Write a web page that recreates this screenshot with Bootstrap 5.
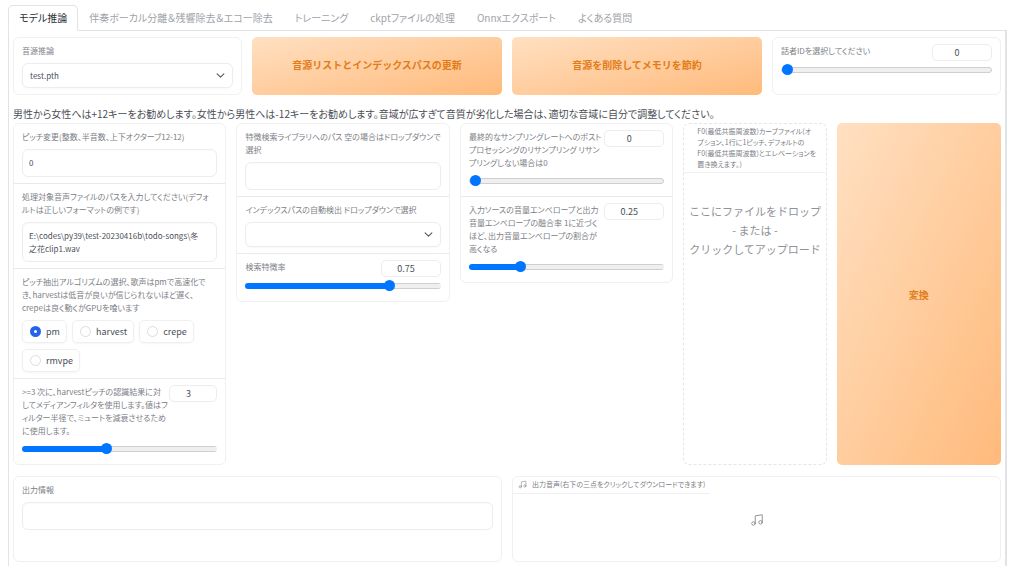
<!DOCTYPE html>
<html lang="ja">
<head>
<meta charset="utf-8">
<meta name="viewport" content="width=device-width, initial-scale=1">
<title>モデル推論</title>
<link href="https://cdn.jsdelivr.net/npm/bootstrap@5.3.0/dist/css/bootstrap.min.css" rel="stylesheet">
<style>
  :root { --line: #f0f0f2; --ink: #4b4f57; --muted: #7d8086; --accent: #e27c17; }
  body { font-family: "Noto Sans CJK JP", sans-serif; font-feature-settings: "palt"; font-size: 8px; line-height: 13px; color: var(--ink); background: #fff; }
  .app { padding: 5px 17px 0 8px; }
  .nav-tabs { --bs-nav-tabs-border-color: #e1e3e6; --bs-nav-tabs-border-radius: 5px; --bs-nav-tabs-link-active-border-color: #e1e3e6 #e1e3e6 #fff; --bs-nav-link-padding-x: 10px; --bs-nav-link-padding-y: 5px; font-size: 10px; line-height: 14px; }
  .nav-tabs .nav-link { font-size: 10px; color: #a0a3a9; }
  .nav-tabs .nav-link.active { color: #2b2f36; }
  .panel { border: solid #e1e3e6; border-width: 0 2px 0 1px; padding: 6px 4px 4px; min-height: calc(100vh - 31px); }
  .row-top { display: grid; grid-template-columns: 229fr 250fr 250fr 229fr; gap: 10px; }
  .row-main { display: grid; grid-template-columns: minmax(0, 213fr) minmax(0, 213fr) minmax(0, 213fr) minmax(0, 143fr) minmax(0, 164fr); gap: 10px; }
  .row-out { display: grid; grid-template-columns: 1fr 1fr; gap: 10px; min-height: 86px; margin-top: 11px; }
  .box { border: 1px solid var(--line); border-radius: 6px; background: #fff; }
  .part { padding: 6px 8px; }
  .part.has-slide { padding-bottom: 10px; }
  .part + .part { border-top: 1px solid #e9e9eb; }
  .cap { display: block; margin-bottom: 6px; font-size: 8px; line-height: 13px; color: var(--muted); white-space: nowrap; }
  .field { display: block; width: 100%; border: 1px solid #ededef; border-radius: 6px; padding: 6px; font-size: 8px; line-height: 14px; color: var(--ink); background-color: #fff; box-shadow: inset 0 1px 2px #00000006; resize: none; overflow: hidden; }
  textarea.field { line-height: 13px; padding-right: 14px; }
  .field.form-select { padding: 5px 7px; height: 25px; line-height: 13px; background-image: url("data:image/svg+xml,%3csvg xmlns='http://www.w3.org/2000/svg' viewBox='0 0 16 16'%3e%3cpath fill='none' stroke='%23555a63' stroke-width='2' stroke-linecap='round' stroke-linejoin='round' d='m2 5 6 6 6-6'/%3e%3c/svg%3e"); background-size: 9px 9px; background-position: right 7px center; box-shadow: 0 1px 2px #00000008; }
  .num { width: 60px; height: 17px; flex: none; border: 1px solid #ededef; border-radius: 5px; padding: 0 10px 0 0; text-align: center; font-size: 9px; line-height: 13px; color: var(--ink); appearance: textfield; }
  .num.narrow { width: 48px; }
  .num::-webkit-inner-spin-button { display: none; }
  .ctl { display: flex; justify-content: space-between; margin-bottom: 6px; }
  .ctl.tight { margin-bottom: 3px; }
  .ctl .cap { margin: 0; }
  .slide { appearance: none; display: block; width: 100%; height: 11px; margin: 0; background: none; }
  .slide::-webkit-slider-runnable-track { height: 6px; border-radius: 3px; border: 1px solid #cfcfcf; background: #efefef; }
  .slide.filled::-webkit-slider-runnable-track { border: 0; background: linear-gradient(to right, #0075ff var(--v), transparent var(--v)), linear-gradient(#cfcfcf 1px, #efefef 1px 5px, #cfcfcf 5px); }
  .slide::-webkit-slider-thumb { appearance: none; width: 11px; height: 11px; margin-top: -4px; border-radius: 50%; background: #0075ff; }
  .slide.filled::-webkit-slider-thumb { margin-top: -3px; }
  .picks { display: flex; flex-wrap: wrap; gap: 6px 5px; }
  .pick { display: flex; align-items: center; gap: 5px; height: 23px; padding: 0 6px 0 7px; border: 1px solid #efeff1; border-radius: 5px; font-size: 9px; color: var(--ink); box-shadow: 0 1px 2px #0000000a; }
  .pick .form-check-input { width: 11px; height: 11px; margin: 0; border-color: #dcdde0; }
  .pick .form-check-input:checked { background-color: #fff; background-image: none; border: 4px solid #2563eb; }
  .btn-warm { --bs-btn-color: var(--accent); --bs-btn-hover-color: var(--accent); --bs-btn-active-color: var(--accent); border: 0; border-radius: 5px; background: linear-gradient(to bottom right, #ffe0c2, #ffba7b); font-size: 10px; line-height: 15px; font-weight: 700; }
  .row-top .btn-warm { padding-bottom: 10px; }
  .note { font-size: 10px; line-height: 15px; margin: 0; padding: 11px 0 2px; }
  .drop { border-style: dashed; border-color: #e6e6e8; }
  .tag { font-size: 7px; line-height: 11px; color: var(--muted); white-space: nowrap; }
  .drop .tag { padding: 2px 0 2px 13px; border-bottom: 1px solid var(--line); }
  .hint { border: 0; padding: 29px 0 0; background: none; font-size: 11px; line-height: 19px; color: #8f9298; white-space: nowrap; }
  .sound .tag { padding: 2px 5px 3px; border-bottom: 1px solid var(--line); gap: 5px; }
  .ic { fill: none; stroke: #85878c; stroke-width: 1.5; stroke-linecap: round; stroke-linejoin: round; }
</style>
</head>
<body>
<svg class="d-none" aria-hidden="true"><symbol id="music" viewBox="0 0 24 24"><path d="M9 18V5l12-2v13"/><circle cx="6" cy="18" r="3"/><circle cx="18" cy="16" r="3"/></symbol></svg>
<div class="app">
  <nav class="nav nav-tabs">
    <a class="nav-link active" href="#">モデル推論</a>
    <a class="nav-link" href="#">伴奏ボーカル分離＆残響除去＆エコー除去</a>
    <a class="nav-link" href="#">トレーニング</a>
    <a class="nav-link" href="#">ckptファイルの処理</a>
    <a class="nav-link" href="#">Onnxエクスポート</a>
    <a class="nav-link" href="#">よくある質問</a>
  </nav>
  <main class="panel">
    <div class="row-top">
      <div class="box part">
        <label class="cap" for="voice">音源推論</label>
        <select class="form-select field" id="voice"><option>test.pth</option></select>
      </div>
      <button class="btn btn-warm" type="button">音源リストとインデックスパスの更新</button>
      <button class="btn btn-warm" type="button">音源を削除してメモリを節約</button>
      <div class="box part">
        <div class="ctl tight">
          <label class="cap" for="sid">話者IDを選択してください</label>
          <input class="num" type="number" value="0" aria-label="話者ID">
        </div>
        <input class="slide" id="sid" type="range" min="0" max="100" value="0">
      </div>
    </div>

    <p class="note">男性から女性へは+12キーをお勧めします。女性から男性へは-12キーをお勧めします。音域が広すぎて音質が劣化した場合は、適切な音域に自分で調整してください。</p>

    <div class="row-main">
      <div class="box align-self-start">
        <div class="part">
          <label class="cap" for="pitch">ピッチ変更(整数、半音数、上下オクターブ12-12)</label>
          <input class="field" id="pitch" type="text" value="0">
        </div>
        <div class="part">
          <label class="cap" for="path">処理対象音声ファイルのパスを入力してください(デフォ<br>ルトは正しいフォーマットの例です)</label>
          <textarea class="field" id="path" rows="2">E:\codes\py39\test-20230416b\todo-songs\冬之花clip1.wav</textarea>
        </div>
        <fieldset class="part">
          <legend class="cap">ピッチ抽出アルゴリズムの選択、歌声はpmで高速化で<br>き、harvestは低音が良いが信じられないほど遅く、<br>crepeは良く動くがGPUを喰います</legend>
          <div class="picks">
            <label class="pick"><input class="form-check-input" type="radio" name="f0" checked>pm</label>
            <label class="pick"><input class="form-check-input" type="radio" name="f0">harvest</label>
            <label class="pick"><input class="form-check-input" type="radio" name="f0">crepe</label>
            <label class="pick"><input class="form-check-input" type="radio" name="f0">rmvpe</label>
          </div>
        </fieldset>
        <div class="part has-slide">
          <div class="ctl">
            <label class="cap" for="filter">&gt;=3 次に、harvestピッチの認識結果に対<br>してメディアンフィルタを使用します。値はフ<br>ィルター半径で、ミュートを減衰させるため<br>に使用します。</label>
            <input class="num narrow" type="number" value="3" aria-label="フィルター半径">
          </div>
          <input class="slide filled" id="filter" type="range" min="0" max="7" value="3" style="--v:43%">
        </div>
      </div>

      <div class="box align-self-start">
        <div class="part">
          <label class="cap" for="lib">特徴検索ライブラリへのパス 空の場合はドロップダウンで<br>選択</label>
          <input class="field" id="lib" type="text">
        </div>
        <div class="part">
          <label class="cap" for="index">インデックスパスの自動検出 ドロップダウンで選択</label>
          <select class="form-select field" id="index"><option></option></select>
        </div>
        <div class="part has-slide">
          <div class="ctl tight">
            <label class="cap" for="rate">検索特徴率</label>
            <input class="num" type="number" value="0.75" aria-label="検索特徴率">
          </div>
          <input class="slide filled" id="rate" type="range" min="0" max="1" step="0.01" value="0.75" style="--v:75%">
        </div>
      </div>

      <div class="box align-self-start">
        <div class="part has-slide">
          <div class="ctl">
            <label class="cap" for="resample">最終的なサンプリングレートへのポスト<br>プロセッシングのリサンプリング リサン<br>プリングしない場合は0</label>
            <input class="num" type="number" value="0" aria-label="リサンプリング">
          </div>
          <input class="slide" id="resample" type="range" min="0" max="48000" value="0">
        </div>
        <div class="part has-slide">
          <div class="ctl">
            <label class="cap" for="mix">入力ソースの音量エンベロープと出力<br>音量エンベロープの融合率 1に近づく<br>ほど、出力音量エンベロープの割合が<br>高くなる</label>
            <input class="num" type="number" value="0.25" aria-label="融合率">
          </div>
          <input class="slide filled" id="mix" type="range" min="0" max="1" step="0.01" value="0.25" style="--v:25%">
        </div>
      </div>

      <div class="box drop d-flex flex-column">
        <div class="tag">F0(最低共振周波数)カーブファイル(オ<br>プション、1行に1ピッチ、デフォルトの<br>F0(最低共振周波数)とエレベーションを<br>置き換えます。)</div>
        <button class="hint" type="button">ここにファイルをドロップ<br>- または -<br>クリックしてアップロード</button>
      </div>

      <button class="btn btn-warm" type="button">変換</button>
    </div>

    <div class="row-out">
      <div class="box part">
        <label class="cap" for="info">出力情報</label>
        <input class="field" id="info" type="text">
      </div>
      <div class="box sound d-flex flex-column">
        <div class="tag d-flex align-items-center align-self-start"><svg class="ic" width="9" height="9"><use href="#music"/></svg>出力音声(右下の三点をクリックしてダウンロードできます)</div>
        <div class="flex-grow-1 d-flex justify-content-center align-items-center pb-3"><svg class="ic" width="14" height="14"><use href="#music"/></svg></div>
      </div>
    </div>
  </main>
</div>
<script src="https://cdn.jsdelivr.net/npm/bootstrap@5.3.0/dist/js/bootstrap.bundle.min.js"></script>
</body>
</html>
